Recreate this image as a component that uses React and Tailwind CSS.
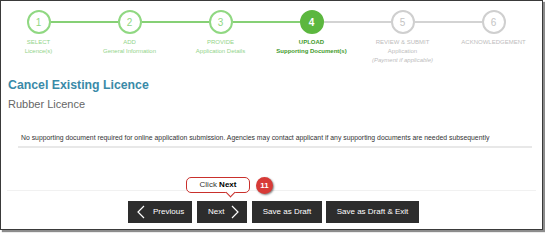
const steps = [
  { n: 1, lines: ["SELECT", "Licence(s)"], state: "done" },
  { n: 2, lines: ["ADD", "General Information"], state: "done" },
  { n: 3, lines: ["PROVIDE", "Application Details"], state: "done" },
  { n: 4, lines: ["UPLOAD", "Supporting Document(s)"], state: "active" },
  { n: 5, lines: ["REVIEW & SUBMIT", "Application"], extra: "(Payment if applicable)", state: "todo" },
  { n: 6, lines: ["ACKNOWLEDGEMENT"], state: "todo" },
];

function Step({ step, index }) {
  const leftGreen = index <= 3;
  const rightGreen = index < 3;
  const circle =
    step.state === "active"
      ? "bg-[#5cb73f] border-[#5cb73f] text-white font-bold"
      : step.state === "done"
      ? "bg-white border-[#90d882] text-[#90d882]"
      : "bg-white border-[#cfcfcf] text-[#c4c4c4]";
  const label =
    step.state === "active"
      ? "text-[#3f9a2c] font-bold"
      : step.state === "done"
      ? "text-[#92d48a]"
      : "text-[#bdbdbd]";

  return (
    <div className="w-[91px] flex flex-col items-center">
      <div className="w-full h-[24px] flex items-center">
        <div
          className={
            "flex-1 h-[2px] " +
            (index === 0 ? "bg-transparent" : leftGreen ? "bg-[#86d075]" : "bg-[#d3d3d3]")
          }
        ></div>
        <div
          className={
            "w-[24px] h-[24px] rounded-full border-2 flex items-center justify-center text-[10px] " +
            circle
          }
        >
          {step.n}
        </div>
        <div
          className={
            "flex-1 h-[2px] " +
            (index === 5 ? "bg-transparent" : rightGreen ? "bg-[#86d075]" : "bg-[#d3d3d3]")
          }
        ></div>
      </div>
      <div className={"mt-[4px] text-[6px] leading-[9px] text-center whitespace-nowrap " + label}>
        {step.lines.map((l) => (
          <div key={l}>{l}</div>
        ))}
        {step.extra && <div className="italic">{step.extra}</div>}
      </div>
    </div>
  );
}

function Chevron({ dir }) {
  return (
    <svg width="8" height="14" viewBox="0 0 8 14" fill="none">
      <path
        d={dir === "left" ? "M7 1 L1 7 L7 13" : "M1 1 L7 7 L1 13"}
        stroke="white"
        strokeWidth="1.2"
      />
    </svg>
  );
}

export default function App() {
  return (
    <div className="w-[545px] h-[233px] bg-white font-['Liberation_Sans',Arial,sans-serif]">
      <div className="relative w-[543px] h-[230px] border border-[#3a3a3a] shadow-[2px_2px_1px_rgba(0,0,0,0.45)] overflow-hidden">
        <div className="flex ml-[-8px] pt-[9px]">
          {steps.map((s, i) => (
            <Step key={s.n} step={s} index={i} />
          ))}
        </div>

        <div className="px-[7px] mt-[13px]">
          <h1 className="text-[12.3px] leading-[15px] font-bold text-[#3a8aa8]">Cancel Existing Licence</h1>
          <h2 className="mt-[5px] text-[11px] leading-[13px] text-[#666]">Rubber Licence</h2>
        </div>

        <div className="ml-[17px] mr-[10px] mt-[22px] pl-[3px] pb-[4px] border-b-2 border-[#e8e8e8] text-[6.85px] leading-[9px] text-[#333] whitespace-nowrap">
          No supporting document required for online application submission. Agencies may contact applicant if any supporting documents are needed subsequently
        </div>

        <div className="mx-[6px] mt-[42px] border-t border-[#f1f1f1]"></div>

        <div className="flex gap-[5px] pl-[127px] mt-[10px] text-[8px] text-white">
          <button className="w-[64px] h-[22px] bg-[#2d2d2d] flex items-center pl-[9px] gap-[8px]">
            <Chevron dir="left" />
            <span>Previous</span>
          </button>
          <button className="w-[50px] h-[22px] bg-[#2d2d2d] flex items-center pl-[11px] gap-[7px]">
            <span>Next</span>
            <Chevron dir="right" />
          </button>
          <button className="w-[70px] h-[22px] bg-[#2d2d2d] flex items-center justify-center">
            Save as Draft
          </button>
          <button className="ml-[-1px] w-[93px] h-[22px] bg-[#2d2d2d] flex items-center justify-center">
            Save as Draft &amp; Exit
          </button>
        </div>

        <div className="absolute left-[185px] top-[176px] w-[64px] h-[16px] rounded-[5px] border border-[#c9302c] bg-white flex items-center justify-center text-[8px] text-[#333]">
          <span>
            Click <b className="text-black">Next</b>
          </span>
          <div className="absolute left-[40px] bottom-[-4px] w-[7px] h-[7px] rotate-45 bg-white border-r border-b border-[#c9302c]"></div>
        </div>

        <div className="absolute left-[255px] top-[176px] w-[17px] h-[17px] rounded-full bg-[#d73a37] shadow-[1px_1px_2px_rgba(0,0,0,0.5)] flex items-center justify-center text-[8px] font-bold text-white">
          11
        </div>
      </div>
    </div>
  );
}
